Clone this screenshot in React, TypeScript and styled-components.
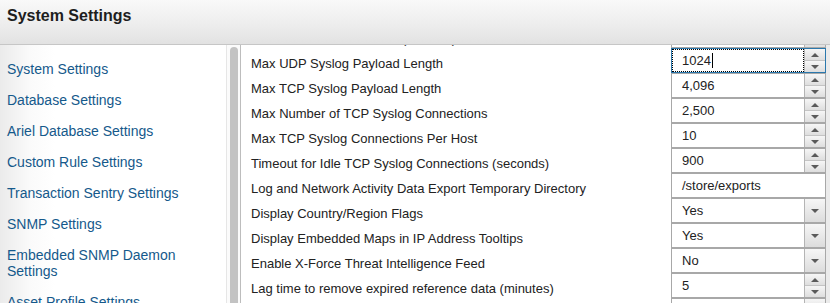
import React from "react";
import styled, { createGlobalStyle, css } from "styled-components";

const GlobalStyle = createGlobalStyle`
  html, body {
    margin: 0;
    padding: 0;
    overflow: hidden;
    background: #ffffff;
  }
  body {
    font-family: "Liberation Sans", Arial, Helvetica, sans-serif;
  }
`;

const Page = styled.div`
  width: 830px;
  height: 303px;
  display: flex;
  flex-direction: column;
  overflow: hidden;
`;

const Header = styled.div`
  height: 45px;
  flex: none;
  box-sizing: border-box;
  padding: 6px 0 0 7px;
  border-bottom: 1px solid #c6c6c6;
  background: linear-gradient(to bottom, #f9f9f9 0%, #ececec 60%, #e2e2e2 100%);
`;

const Title = styled.h1`
  margin: 0;
  font-size: 16px;
  line-height: 20px;
  font-weight: bold;
  color: #1e1e1e;
`;

const Body = styled.div`
  flex: 1;
  display: flex;
  min-height: 0;
`;

const Sidebar = styled.div`
  width: 241px;
  flex: none;
  box-sizing: border-box;
  display: flex;
  border-right: 1px solid #bdbdbd;
  background: linear-gradient(to right, #ebebeb 0px, #fafafa 30px, #ffffff 55px);
`;

const NavList = styled.ul`
  list-style: none;
  margin: 0;
  padding: 16px 0 0 7px;
  flex: 1;
  display: flex;
  flex-direction: column;
  gap: 15px;
`;

const NavItem = styled.li`
  font-size: 14px;
  line-height: 16px;
  color: #15598b;
  cursor: pointer;
`;

const ScrollTrack = styled.div`
  width: 14px;
  flex: none;
  box-sizing: border-box;
  border-left: 1px solid #e6e6e6;
  background: #fbfbfb;
  padding: 2px 2px 0 3px;
`;

const ScrollThumb = styled.div`
  height: 100%;
  border-radius: 4px 4px 0 0;
  background: #c3c3c3;
`;

const Content = styled.div`
  flex: 1;
  display: flex;
  min-width: 0;
  overflow: hidden;
`;

const Rows = styled.div`
  flex: 1;
  margin-top: -22px;
  display: grid;
  grid-template-columns: 1fr 155px;
  grid-auto-rows: 25px;
  align-content: start;
  padding-left: 10px;
`;

const RightEdge = styled.div`
  width: 4px;
  flex: none;
  background: #ebebeb;
`;

const Label = styled.div`
  font-size: 13px;
  line-height: 25px;
  color: #222;
  white-space: nowrap;
  padding-top: 3px;
`;

const Field = styled.div<{ $focused?: boolean }>`
  display: flex;
  height: 25px;
  box-sizing: border-box;
  border: 1px solid #a8a8a8;
  background: #fff;
  ${(p) =>
    p.$focused &&
    css`
      border-color: #2b78ad;
    `}
`;

const Value = styled.div<{ $focused?: boolean }>`
  flex: 1;
  display: flex;
  align-items: center;
  padding-left: 10px;
  font-size: 13px;
  color: #222;
  ${(p) =>
    p.$focused &&
    css`
      outline: 1px dotted #000;
      outline-offset: -1px;
    `}
`;

const Caret = styled.span`
  display: inline-block;
  width: 1px;
  height: 15px;
  background: #000;
  margin-left: 1px;
`;

const Spinner = styled.div`
  width: 20px;
  flex: none;
  display: flex;
  flex-direction: column;
  border-left: 1px solid #b4b4b4;
`;

const SpinHalf = styled.div<{ $top?: boolean }>`
  flex: 1;
  display: flex;
  align-items: center;
  justify-content: center;
  background: linear-gradient(to bottom, #f6f6f6, #dedede);
  ${(p) =>
    p.$top &&
    css`
      border-bottom: 1px solid #c4c4c4;
    `}
`;

const DropButton = styled.div`
  width: 20px;
  flex: none;
  display: flex;
  align-items: center;
  justify-content: center;
  border-left: 1px solid #b4b4b4;
  background: linear-gradient(to bottom, #f6f6f6, #dcdcdc);
`;

const Arrow = styled.span<{ $up?: boolean }>`
  width: 0;
  height: 0;
  border-left: 4px solid transparent;
  border-right: 4px solid transparent;
  ${(p) =>
    p.$up
      ? css`
          border-bottom: 4px solid #5a5a5a;
        `
      : css`
          border-top: 4px solid #5a5a5a;
        `}
`;

type Kind = "number" | "text" | "select";

interface Setting {
  label: string;
  value: string;
  kind: Kind;
  focused?: boolean;
}

const navItems = [
  "System Settings",
  "Database Settings",
  "Ariel Database Settings",
  "Custom Rule Settings",
  "Transaction Sentry Settings",
  "SNMP Settings",
  "Embedded SNMP Daemon Settings",
  "Asset Profile Settings",
];

const settings: Setting[] = [
  { label: "Maximum Retention Time (minutes)", value: "60", kind: "number" },
  { label: "Max UDP Syslog Payload Length", value: "1024", kind: "number", focused: true },
  { label: "Max TCP Syslog Payload Length", value: "4,096", kind: "number" },
  { label: "Max Number of TCP Syslog Connections", value: "2,500", kind: "number" },
  { label: "Max TCP Syslog Connections Per Host", value: "10", kind: "number" },
  { label: "Timeout for Idle TCP Syslog Connections (seconds)", value: "900", kind: "number" },
  { label: "Log and Network Activity Data Export Temporary Directory", value: "/store/exports", kind: "text" },
  { label: "Display Country/Region Flags", value: "Yes", kind: "select" },
  { label: "Display Embedded Maps in IP Address Tooltips", value: "Yes", kind: "select" },
  { label: "Enable X-Force Threat Intelligence Feed", value: "No", kind: "select" },
  { label: "Lag time to remove expired reference data (minutes)", value: "5", kind: "number" },
  { label: "Reference Data Cleanup Interval (minutes)", value: "60", kind: "number" },
];

const SettingField: React.FC<{ setting: Setting }> = ({ setting }) => (
  <Field $focused={setting.focused}>
    <Value $focused={setting.focused}>
      {setting.value}
      {setting.focused && <Caret />}
    </Value>
    {setting.kind === "number" && (
      <Spinner>
        <SpinHalf $top>
          <Arrow $up />
        </SpinHalf>
        <SpinHalf>
          <Arrow />
        </SpinHalf>
      </Spinner>
    )}
    {setting.kind === "select" && (
      <DropButton>
        <Arrow />
      </DropButton>
    )}
  </Field>
);

const App: React.FC = () => (
  <Page>
    <GlobalStyle />
    <Header>
      <Title>System Settings</Title>
    </Header>
    <Body>
      <Sidebar>
        <NavList>
          {navItems.map((item) => (
            <NavItem key={item}>{item}</NavItem>
          ))}
        </NavList>
        <ScrollTrack>
          <ScrollThumb />
        </ScrollTrack>
      </Sidebar>
      <Content>
        <Rows>
          {settings.map((s) => (
            <React.Fragment key={s.label}>
              <Label>{s.label}</Label>
              <SettingField setting={s} />
            </React.Fragment>
          ))}
        </Rows>
        <RightEdge />
      </Content>
    </Body>
  </Page>
);

export default App;
